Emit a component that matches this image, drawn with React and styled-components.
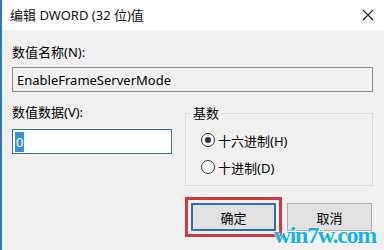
import React from 'react';
import styled, { createGlobalStyle } from 'styled-components';

const GlobalStyle = createGlobalStyle`
  html, body {
    margin: 0;
    padding: 0;
    background: #f0f0f0;
  }
  body {
    font-family: "Noto Sans", "Noto Sans CJK SC", sans-serif;
    font-size: 13px;
    color: #000;
  }
`;

const Window = styled.div`
  position: relative;
  width: 384px;
  height: 250px;
  box-sizing: border-box;
  border-left: 2px solid #2b79c2;
  background: #f0f0f0;
  overflow: hidden;
`;

const TitleBar = styled.div`
  height: 30px;
  background: #fff;
  display: flex;
  align-items: center;
  justify-content: space-between;
  padding: 0 10px 0 8px;
`;

const Title = styled.span`
  font-size: 13px;
  line-height: 16px;
  color: #111;
`;

const Close = styled.svg`
  width: 12px;
  height: 12px;
`;

const Body = styled.div`
  padding: 14px 11px 0 10px;
  display: flex;
  flex-direction: column;
`;

const Label = styled.div`
  font-size: 13px;
  line-height: 16px;
  height: 16px;
  margin-bottom: ${p => p.$gap || 7}px;
`;

const Field = styled.div`
  box-sizing: border-box;
  height: 25px;
  border: 1px solid ${p => (p.$focused ? '#3b6f95' : '#8a8a8a')};
  background: ${p => (p.$focused ? '#fff' : '#f0f0f0')};
  display: flex;
  align-items: center;
  padding-left: ${p => p.$pad || 4}px;
  font-size: 13px;
`;

const Selected = styled.span`
  background: #3f8ede;
  color: #fff;
  padding: 1px 1px;
  line-height: 18px;
`;

const Row = styled.div`
  display: flex;
  margin-top: 12px;
  gap: 13px;
`;

const LeftCol = styled.div`
  width: 160px;
  display: flex;
  flex-direction: column;
`;

const GroupBox = styled.div`
  box-sizing: border-box;
  margin-top: 9px;
  width: 188px;
  height: 73px;
  border: 1px solid #dcdcdc;
  padding-left: 15px;
  display: flex;
  flex-direction: column;
  gap: 11px;
`;

const GroupTitle = styled.span`
  align-self: flex-start;
  margin: -9px 0 0 -11px;
  padding: 0 3px;
  background: #f0f0f0;
  font-size: 13px;
  line-height: 16px;
  height: 16px;
`;

const RadioRow = styled.label`
  display: flex;
  align-items: center;
  gap: 3px;
  height: 16px;
  font-size: 13px;
`;

const RadioDot = styled.span`
  box-sizing: border-box;
  width: 14px;
  height: 14px;
  border-radius: 50%;
  border: 1px solid #333;
  background: #fff;
  display: flex;
  align-items: center;
  justify-content: center;

  &::after {
    content: '';
    width: 6px;
    height: 6px;
    border-radius: 50%;
    background: ${p => (p.$on ? '#333' : 'transparent')};
  }
`;

const Buttons = styled.div`
  display: flex;
  justify-content: flex-end;
  align-items: center;
  gap: 5px;
  margin-top: 11px;
  padding-right: 1px;
`;

const Highlight = styled.div`
  border: 3px solid #d0393f;
  padding: 3px;
`;

const Button = styled.button`
  box-sizing: border-box;
  width: 85px;
  height: 28px;
  font-family: inherit;
  font-size: 13px;
  color: #000;
  background: #e1e1e1;
  border: ${p => (p.$primary ? '2px solid #2d6fa8' : '1px solid #adadad')};
  padding: 0;
`;

const Watermark = styled.div`
  position: absolute;
  right: 8px;
  bottom: 1px;
  font-family: "Liberation Serif", serif;
  font-weight: bold;
  font-size: 24px;
  letter-spacing: -1.3px;
  color: #17b0e6;
  text-shadow: 0 0 2px #fff, 1px 1px 1px rgba(255, 255, 255, 0.8);
`;

export default function App() {
  return (
    <>
      <GlobalStyle />
      <Window>
        <TitleBar>
          <Title>编辑 DWORD (32 位)值</Title>
          <Close viewBox="0 0 12 12">
            <path d="M1 1 L11 11 M11 1 L1 11" stroke="#222" strokeWidth="1.1" />
          </Close>
        </TitleBar>
        <Body>
          <Label>数值名称(N):</Label>
          <Field $pad={4}>EnableFrameServerMode</Field>
          <Row>
            <LeftCol>
              <Label $gap={9}>数值数据(V):</Label>
              <Field $focused $pad={2}>
                <Selected>0</Selected>
              </Field>
            </LeftCol>
            <GroupBox>
              <GroupTitle>基数</GroupTitle>
              <RadioRow>
                <RadioDot $on />
                十六进制(H)
              </RadioRow>
              <RadioRow>
                <RadioDot />
                十进制(D)
              </RadioRow>
            </GroupBox>
          </Row>
          <Buttons>
            <Highlight>
              <Button $primary>确定</Button>
            </Highlight>
            <Button>取消</Button>
          </Buttons>
        </Body>
        <Watermark>win7w.com</Watermark>
      </Window>
    </>
  );
}
